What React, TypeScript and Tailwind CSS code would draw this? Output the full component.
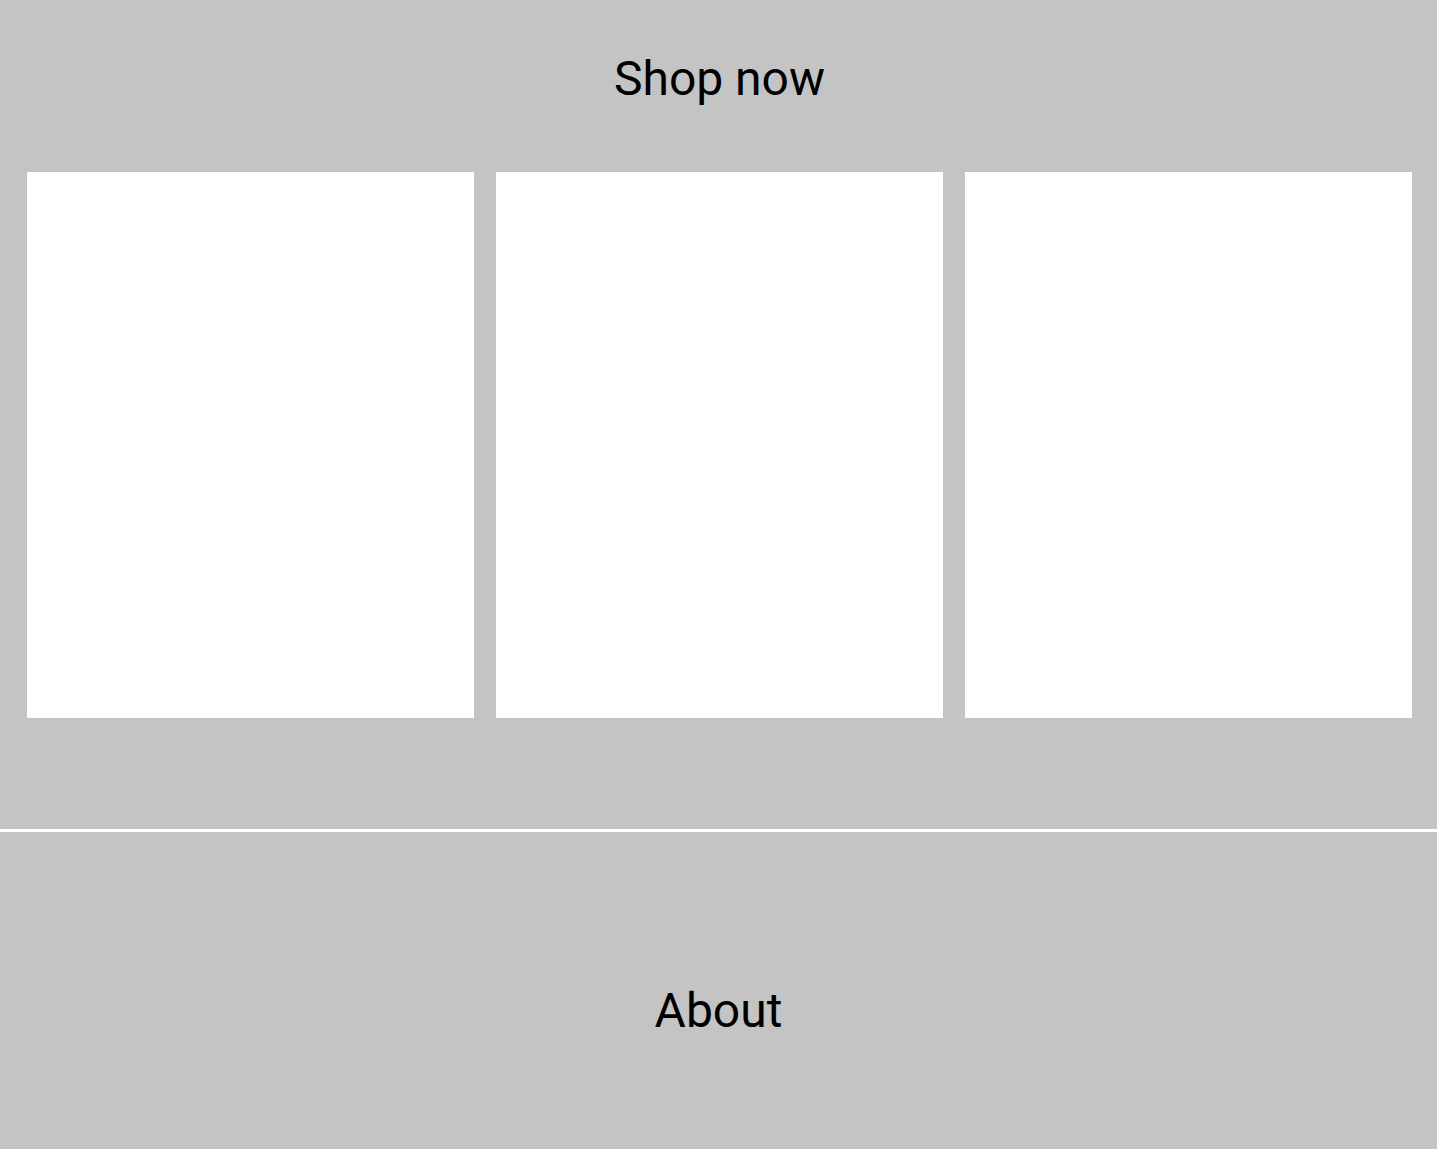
export default function App() {
  return (
    <div className="min-h-screen bg-[#c4c4c4] font-['Roboto',sans-serif] text-black">
      {/* shop section */}
      <section className="pt-[51px] pb-[111px] pl-[27px] pr-[25px] border-b-[3px] border-white">
        <h2 className="text-center text-[48px] leading-[56px] font-normal mb-[65px]">Shop now</h2>
        <div className="grid grid-cols-3 gap-[22px]">
          <div className="h-[546px] bg-white" />
          <div className="h-[546px] bg-white" />
          <div className="h-[546px] bg-white" />
        </div>
      </section>

      {/* about section */}
      <section className="pt-[151px] pb-[145px]">
        <h2 className="text-center text-[48px] leading-[56px] font-normal">About</h2>
      </section>
    </div>
  );
}
